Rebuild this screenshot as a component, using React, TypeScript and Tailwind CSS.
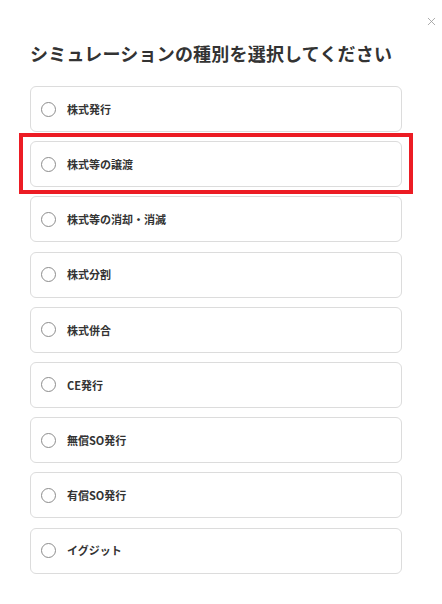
import { X } from "lucide-react"

const options = [
  "株式発行",
  "株式等の譲渡",
  "株式等の消却・消滅",
  "株式分割",
  "株式併合",
  "CE発行",
  "無償SO発行",
  "有償SO発行",
  "イグジット",
]

const App = () => {
  return (
    <div
      className="relative min-h-screen bg-white"
      style={{ fontFamily: '"Noto Sans CJK JP", "Noto Sans", sans-serif' }}
    >
      {/* close */}
      <button className="absolute right-[4px] top-[15px] text-[#9a9a9a]">
        <X size={13} strokeWidth={1.5} />
      </button>

      <div className="pl-[30px] pt-[41px]">
        <h2 className="text-[18px] font-bold leading-[24px] tracking-[0.2px] text-[#333]">
          シミュレーションの種別を選択してください
        </h2>

        <ul className="mt-[21px] flex w-[372px] flex-col gap-[9.2px]">
          {options.map((label, i) => (
            <li key={label} className="relative">
              <label className="flex h-[46px] cursor-pointer items-center rounded-[6px] border border-[#dcdcdc] bg-white pl-[10px]">
                <span className="h-[15px] w-[15px] shrink-0 rounded-full border border-[#8c8c8c]" />
                <span className="ml-[11px] text-[11px] font-bold text-[#333]">
                  {label}
                </span>
              </label>
              {i === 1 && (
                <div className="pointer-events-none absolute -bottom-[7px] -left-[11px] -right-[11px] -top-[8px] border-4 border-[#ec1c24]" />
              )}
            </li>
          ))}
        </ul>
      </div>
    </div>
  )
}

export default App
